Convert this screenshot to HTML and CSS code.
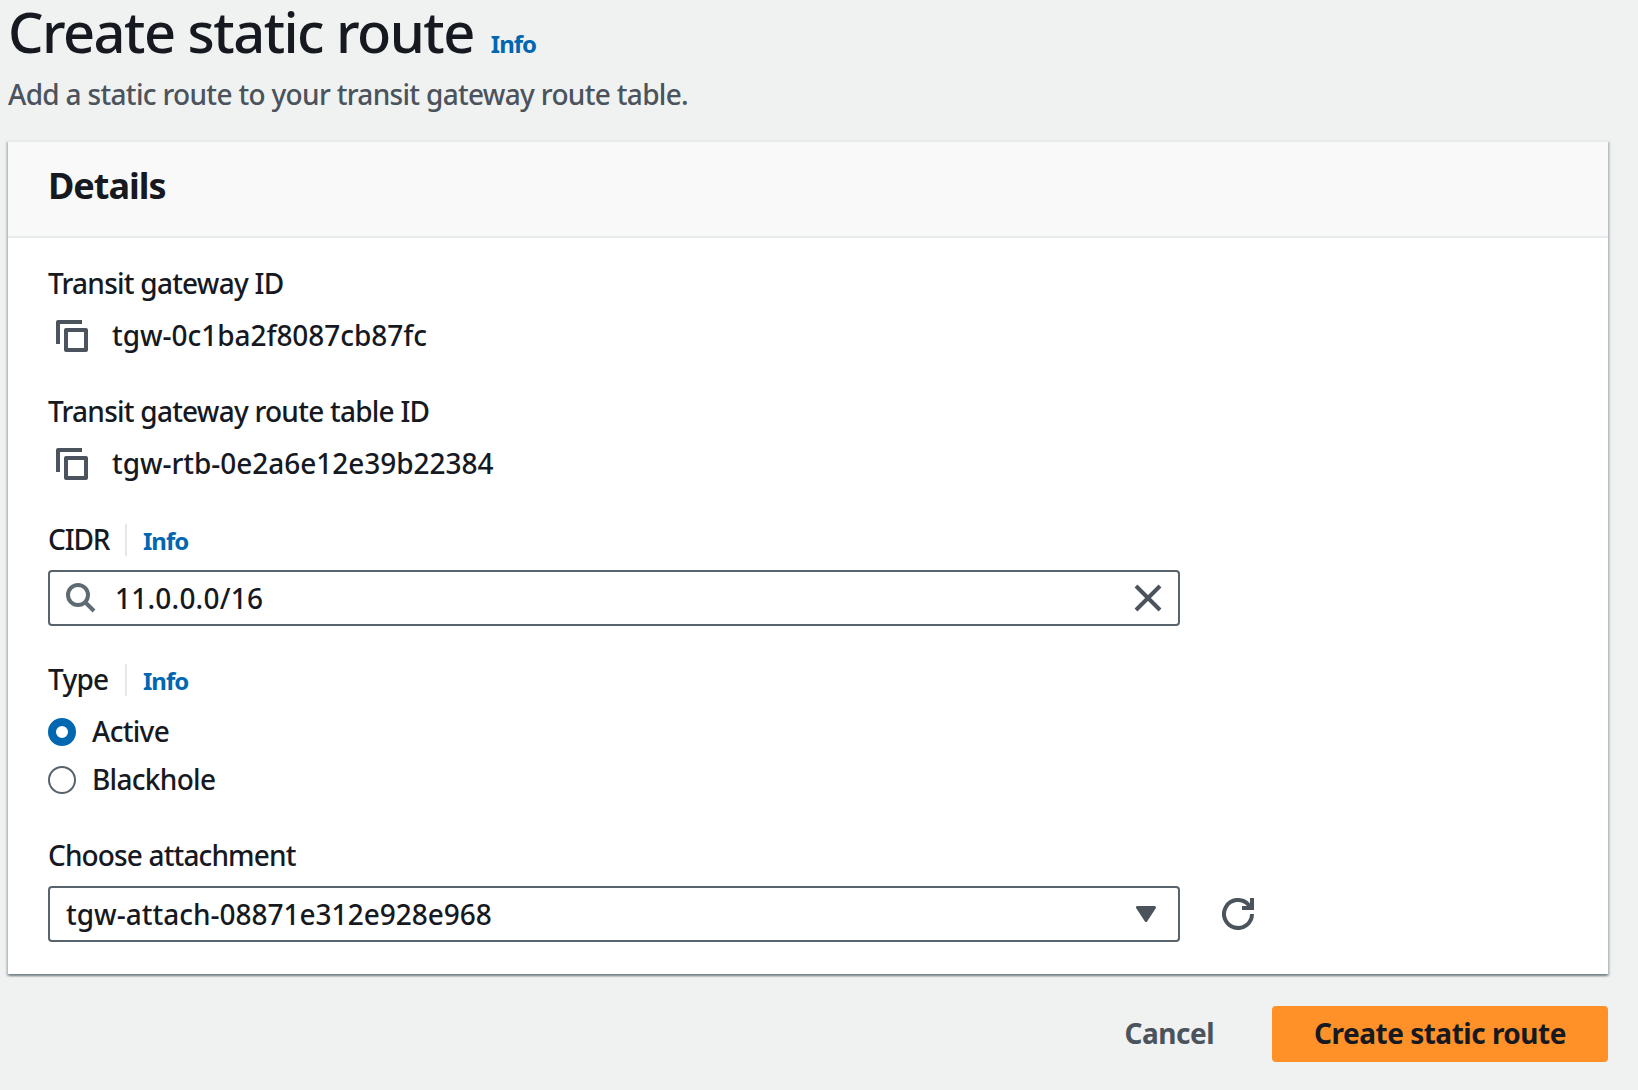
FILE: index.html
```html
<!DOCTYPE html>
<html lang="en">
<head>
<meta charset="utf-8">
<title>Create static route</title>
<link rel="stylesheet" href="styles.css">
</head>
<body>
<main class="page">
  <header class="page-header">
    <div class="title-row">
      <h1 class="title">Create static route</h1>
      <a class="info">Info</a>
    </div>
    <p class="description">Add a static route to your transit gateway route table.</p>
  </header>
  <section class="card">
    <div class="card-header"><h2 class="card-title">Details</h2></div>
    <div class="card-body">
      <div class="field">
        <div class="label">Transit gateway ID</div>
        <div class="copy-value">
          <svg class="copy-icon" viewBox="0 0 32 32"><path d="M2 24V2h24M10 10h20v20H10z"/></svg>
          <span>tgw-0c1ba2f8087cb87fc</span>
        </div>
      </div>
      <div class="field">
        <div class="label">Transit gateway route table ID</div>
        <div class="copy-value">
          <svg class="copy-icon" viewBox="0 0 32 32"><path d="M2 24V2h24M10 10h20v20H10z"/></svg>
          <span>tgw-rtb-0e2a6e12e39b22384</span>
        </div>
      </div>
      <div class="field">
        <div class="label label-with-info"><span class="label-short label-caps">CIDR</span><a class="info info-divided">Info</a></div>
        <div class="control search">
          <svg class="search-icon" viewBox="0 0 30 30"><circle cx="12" cy="12" r="10"/><path d="M19 19l9 9"/></svg>
          <span class="control-value cidr-value">11.0.0.0/16</span>
          <svg class="clear-icon" viewBox="0 0 28 28"><path d="M2 2l24 24M26 2L2 26"/></svg>
        </div>
      </div>
      <div class="field">
        <div class="label label-with-info"><span class="label-short">Type</span><a class="info info-divided">Info</a></div>
        <div class="radios">
          <div class="radio"><i class="dot dot-checked"></i><span>Active</span></div>
          <div class="radio"><i class="dot"></i><span>Blackhole</span></div>
        </div>
      </div>
      <div class="field">
        <div class="label label-attachment">Choose attachment</div>
        <div class="select-row">
          <div class="control select">
            <span class="control-value">tgw-attach-08871e312e928e968</span>
            <svg class="caret-icon" viewBox="0 0 20 16"><path d="M1.5 1.5h17L10 14.5z"/></svg>
          </div>
          <svg class="refresh-icon" viewBox="0 0 32 32"><path d="M30 16a14 14 0 1 1-4-9.8L29 10M30 0v10H20"/></svg>
        </div>
      </div>
    </div>
  </section>
  <footer class="actions">
    <a class="cancel">Cancel</a>
    <button class="primary">Create static route</button>
  </footer>
</main>
</body>
</html>
```
FILE: styles.css
```css
* { box-sizing: border-box; }
body {
  margin: 0;
  background: #f0f2f2;
  color: #16191f;
  font: 500 28px/44px "Noto Sans", sans-serif;
}
h1, h2, p { margin: 0; }
.page { width: 1608px; padding-left: 8px; }
.page-header { height: 140px; display: flex; flex-direction: column; }
.title-row { display: flex; align-items: baseline; gap: 17px; height: 72px; }
.title { font-size: 56px; line-height: 62px; font-weight: 500; letter-spacing: -1.55px; }
.info { font-size: 24px; line-height: 32px; font-weight: 700; letter-spacing: -1px; color: #0067b0; }
.description { color: #4b535c; letter-spacing: -.68px; }
.card {
  height: 834px;
  background: #fff;
  border-top: 2px solid #e7ebeb;
  box-shadow: 0 2px 2px 0 rgba(0, 28, 36, .35), 2px 2px 2px 0 rgba(0, 28, 36, .15), -2px 2px 2px 0 rgba(0, 28, 36, .15);
}
.card-header { height: 96px; padding: 20px 40px 0; background: #f9f9f9; border-bottom: 2px solid #e7ebeb; }
.card-title { font-size: 36px; line-height: 48px; font-weight: 700; letter-spacing: -1px; }
.card-body { padding: 23px 40px 32px; display: flex; flex-direction: column; gap: 32px; }
.label { height: 44px; letter-spacing: -.76px; }
.label-attachment { letter-spacing: -.86px; }
.label-with-info { display: flex; align-items: baseline; }
.label-short { width: 77px; }
.label-caps { letter-spacing: -1.1px; }
.info-divided { position: relative; padding-left: 18px; }
.info-divided::before { content: ""; position: absolute; left: 0; top: -1px; width: 2px; height: 32px; background: #e3e8e8; }
.copy-value { display: flex; align-items: center; gap: 24px; margin-top: 8px; padding-left: 8px; letter-spacing: -.04px; }
svg { display: block; fill: none; stroke: #4b535c; stroke-width: 4; flex: none; }
.copy-icon { width: 32px; height: 32px; margin-top: 1px; stroke-linejoin: round; }
.control { width: 1132px; height: 56px; margin-top: 9px; display: flex; align-items: center; background: #fff; border: 2px solid #59636c; border-radius: 4px; padding: 0 16px; }
.control-value { flex: 1; }
.cidr-value { letter-spacing: .22px; }
.search { margin-bottom: -1px; }
.search-icon { width: 30px; height: 30px; margin-right: 19px; stroke: #5f6b72; }
.clear-icon { width: 28px; height: 28px; }
.caret-icon { width: 20px; height: 16px; margin-right: 6px; fill: #4b535c; stroke-width: 3; stroke-linejoin: round; }
.radios { display: flex; flex-direction: column; gap: 4px; margin-top: 8px; letter-spacing: -.7px; }
.radio { display: flex; align-items: center; gap: 16px; }
.dot { width: 28px; height: 28px; margin-top: 1px; border: 2px solid #59636c; border-radius: 50%; background: #fff; }
.dot-checked { border: 8px solid #0067b0; }
.select-row { display: flex; align-items: center; gap: 42px; margin-top: 9px; }
.select-row .control { margin: 0; }
.refresh-icon { width: 32px; height: 32px; }
.actions { display: flex; justify-content: flex-end; align-items: center; gap: 58px; margin-top: 32px; font-weight: 700; letter-spacing: -.5px; }
.cancel { color: #4b535c; padding-bottom: 2px; }
.primary { width: 336px; height: 56px; border: 0; border-radius: 4px; background: #ff9128; color: #16191f; font: inherit; letter-spacing: inherit; padding: 0 0 2px; text-align: center; }
```
